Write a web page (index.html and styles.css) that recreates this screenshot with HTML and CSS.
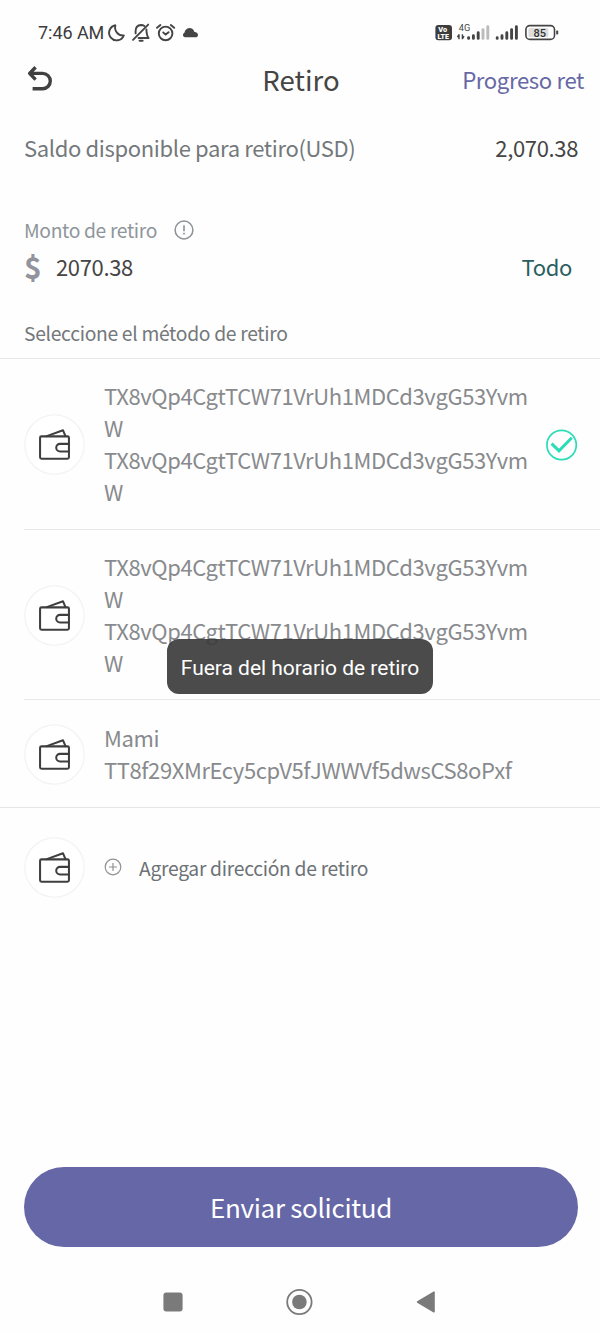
FILE: index.html
```html
<!DOCTYPE html>
<html lang="es">
<head>
<meta charset="utf-8">
<title>Retiro</title>
<link rel="stylesheet" href="styles.css">
</head>
<body>
<svg class="defs" width="0" height="0">
  <symbol id="wallet" viewBox="0 0 60 60">
    <circle cx="30" cy="30" r="29.2" fill="#fff" stroke="#f3f3f3" stroke-width="1.2"/>
    <g fill="none" stroke="#3e3e3e" stroke-width="2" stroke-linejoin="round" stroke-linecap="round">
      <rect x="15.8" y="22" width="28.4" height="22" rx="1.4"/>
      <path d="M22.4 21.8 38.4 16 40.8 21.8"/>
      <path d="M44.2 29.4H35.4a3.7 3.7 0 0 0 0 7.4H44.2"/>
    </g>
  </symbol>
</svg>
<div class="screen">
  <div class="status">
    <span class="clock">7:46 AM</span>
    <svg class="status-left" width="94" height="24" viewBox="106 20 94 24" fill="none" stroke="#444" stroke-width="1.9" stroke-linecap="round" stroke-linejoin="round">
      <path d="M115.4 25.3a7.6 7.6 0 1 0 8.4 10.2a8 8 0 0 1-8.4-10.2z"/>
      <path d="M133 39.8 148.2 24.6"/>
      <path d="M135.6 33.4v-2.2c0-3.6 2.2-6 5.4-6.2 1.4 0 2.4.3 3.4 1M146.4 29.4c.2 4.2.2 6 2.2 8.6H138.6"/>
      <path d="M139.6 40.8h3" stroke-width="2"/>
      <circle cx="165.6" cy="33.4" r="6.8"/>
      <path d="M163.2 32.4l2.4 2.2 3-2.4M157 27.8l3.4-2.8M174.2 27.8l-3.4-2.8"/>
      <path d="M184.8 37.2a2.3 2.3 0 0 1-.4-4.4c.7-2.7 2.2-4.5 5-4.7 2.5 0 4.2 1.4 4.8 3.6 2.6.2 3.9 1.7 3.8 3.4 0 1.2-.8 2.1-1.8 2.1z" fill="#444" stroke="none"/>
    </svg>
    <svg class="status-right" width="126" height="24" viewBox="434 20 126 24">
      <rect x="435.4" y="25" width="16.6" height="15.2" rx="3" fill="#3d3d3d"/>
      <g fill="#fff" font-family="Roboto, sans-serif" font-weight="900"><text x="438.3" y="32" font-size="7.4">Vo</text><text x="437.4" y="38.8" font-size="7">LTE</text></g>
      <text x="458.8" y="31" fill="#444" font-family="Roboto, sans-serif" font-size="9.2">4G</text>
      <path d="M459 34.2v5M457.4 37.2 459 34.6M462.4 34.2v5M464 36.2l-1.6 2.6" fill="none" stroke="#444" stroke-width="1.4"/>
      <g stroke="#444" stroke-width="2.9" stroke-linecap="round">
        <path d="M468.6 37.6v.8M473.4 35.8v2.6M478.2 32.8v5.6"/>
        <path d="M483 29.6v8.8M487.8 26.8v11.6" stroke="#bbb"/>
        <path d="M497.2 37.8v.6M502 35.8v2.6M506.8 32.8v5.6M511.6 29.6v8.8M516.4 26.8v11.6"/>
      </g>
      <rect x="525.9" y="25.6" width="28.6" height="13.8" rx="4" fill="#fff" stroke="#444" stroke-width="1.6"/>
      <rect x="528.4" y="28" width="20" height="9" rx="1.5" fill="#ddd"/>
      <path d="M557.2 30.6v3.8" stroke="#444" stroke-width="2"/>
      <text x="539.8" y="36.8" text-anchor="middle" fill="#333" font-family="Roboto, sans-serif" font-size="11" font-weight="500">85</text>
    </svg>
  </div>
  <header class="header">
    <svg class="back" width="26" height="26" viewBox="0 0 26 26" fill="none" stroke="#414141" stroke-width="3.4" stroke-linejoin="round"><path d="M8.6 1.2 2.6 7.4 8.6 13.6M2.6 7.4H15.6a7.7 7.7 0 0 1 0 15.4H5.6"/></svg>
    <h1 class="title">Retiro</h1>
    <span class="progress">Progreso ret</span>
  </header>
  <div class="balance"><span class="balance-label">Saldo disponible para retiro(USD)</span><span class="balance-value">2,070.38</span></div>
  <div class="amount-label"><span>Monto de retiro</span>
    <svg width="20" height="20" viewBox="0 0 20 20"><circle cx="10" cy="10" r="8.9" fill="none" stroke="#8b9298" stroke-width="1.5"/><path d="M10 5.2v6M10 12.8v1.8" stroke="#8b9298" stroke-width="1.6"/></svg>
  </div>
  <div class="amount"><span class="currency">$</span><span class="amount-value">2070.38</span><span class="all">Todo</span></div>
  <div class="method-label">Seleccione el método de retiro</div>
  <ul class="methods">
    <li class="method">
      <svg class="wallet"><use href="#wallet"/></svg>
      <div class="address"><p>TX8vQp4CgtTCW71VrUh1MDCd3vgG53YvmW</p><p>TX8vQp4CgtTCW71VrUh1MDCd3vgG53YvmW</p></div>
      <svg class="check" width="32" height="32" viewBox="0 0 32 32" fill="none" stroke="#2bdcb6"><circle cx="15.6" cy="16" r="14.7" stroke-width="1.7"/><path d="M5.6 14.6 13 21.8 25.8 8.8" stroke-width="3"/></svg>
    </li>
    <li class="method">
      <svg class="wallet"><use href="#wallet"/></svg>
      <div class="address"><p>TX8vQp4CgtTCW71VrUh1MDCd3vgG53YvmW</p><p>TX8vQp4CgtTCW71VrUh1MDCd3vgG53YvmW</p></div>
    </li>
    <li class="method">
      <svg class="wallet"><use href="#wallet"/></svg>
      <div class="address"><p>Mami</p><p>TT8f29XMrEcy5cpV5fJWWVf5dwsCS8oPxf</p></div>
    </li>
  </ul>
  <div class="add">
    <svg class="wallet"><use href="#wallet"/></svg>
    <svg class="plus" width="18" height="18" viewBox="0 0 18 18" fill="none" stroke="#929292" stroke-width="1.2"><circle cx="9" cy="9" r="7.8"/><path d="M9 5v8M5 9h8"/></svg>
    <span>Agregar dirección de retiro</span>
  </div>
  <button class="submit">Enviar solicitud</button>
  <nav class="nav">
    <svg width="28" height="28" viewBox="0 0 28 28"><rect x="4.4" y="4.4" width="19.2" height="19.2" rx="3" fill="#7a7a7a"/></svg>
    <svg width="28" height="28" viewBox="0 0 28 28"><circle cx="14.4" cy="14" r="12.2" fill="none" stroke="#7a7a7a" stroke-width="1.8"/><circle cx="14.4" cy="14" r="7.3" fill="#7a7a7a"/></svg>
    <svg width="28" height="28" viewBox="0 0 28 28"><path d="M5.6 14 22 4.2V23.8z" fill="#7a7a7a" stroke="#7a7a7a" stroke-width="1.6" stroke-linejoin="round"/></svg>
  </nav>
  <div class="toast">Fuera del horario de retiro</div>
</div>
</body>
</html>
```
FILE: styles.css
```css
* { box-sizing: border-box; }
body { margin: 0; background: #fefefe; font-family: "Noto Sans CJK SC", sans-serif; letter-spacing: -.35px; color: #454545; }
svg { display: block; flex: none; letter-spacing: 0; }
p, h1, ul { margin: 0; padding: 0; }
.defs { position: absolute; }
.screen { position: relative; display: flex; flex-direction: column; width: 600px; height: 1333px; white-space: nowrap; overflow: hidden; }
.status { display: flex; align-items: center; height: 56px; padding: 8px 40px 0 38px; }
.clock { width: 68px; font: 400 18px/24px Roboto, sans-serif; letter-spacing: -.05px; padding-top: 2px; color: #3c3c3c; }
.status-right { margin-left: auto; }
.header { display: grid; grid-template-columns: 1fr auto 1fr; align-items: center; height: 52px; padding: 0 16px 6px 27px; }
.title { font-size: 27.6px; line-height: 40px; font-weight: 400; margin-left: -9px; letter-spacing: 0; }
.progress { justify-self: end; font-size: 22.2px; line-height: 34px; letter-spacing: -.4px; color: #6768a6; }
.balance { display: flex; justify-content: space-between; align-items: center; height: 80px; padding: 0 22px 2px 24px; font-size: 22px; }
.balance-label { color: #74787b; }
.amount-label { display: flex; align-items: center; gap: 17px; margin-top: 25px; height: 33px; padding-left: 24px; font-size: 19.3px; color: #8f969b; }
.amount { display: flex; align-items: center; height: 43px; padding: 0 28px 3px 24px; font-size: 22px; }
.currency { width: 32px; font-size: 30px; font-weight: 700; line-height: 40px; color: #92939d; }
.all { margin-left: auto; color: #2b5f62; }
.method-label { height: 69px; padding: 27px 0 0 24px; font-size: 19.3px; line-height: 34px; letter-spacing: -.31px; color: #74787b; }
.methods { list-style: none; border-top: 1px solid #e5e5e5; border-bottom: 1px solid #e5e5e5; }
.method { display: flex; align-items: center; height: 171px; margin-left: 24px; padding: 1px 22px 0 0; border-bottom: 1px solid #e8e8e8; }
.method:nth-child(2) { height: 170px; }
.method:last-child { height: 107px; border-bottom: 0; }
.wallet { width: 61px; height: 61px; }
.address { width: 426px; margin: -3px 15px 0 19px; font-size: 22px; line-height: 32px; letter-spacing: -.4px; color: #888a8d; white-space: normal; overflow-wrap: anywhere; }
.check { margin-left: auto; }
.add { display: flex; align-items: center; height: 119px; padding-left: 24px; font-size: 19.3px; letter-spacing: -.3px; color: #6c7276; }
.plus { margin: 0 17px 2px 19px; }
.submit { width: 554px; height: 80px; margin: auto 0 0 24px; padding: 0; border: 0; border-radius: 40px; background: #6667a6; color: #fff; font: 400 26px/80px "Noto Sans CJK SC", sans-serif; letter-spacing: -.3px; }
.nav { display: flex; justify-content: space-between; align-items: center; height: 86px; padding: 23px 160px 0 158.5px; }
.toast { position: absolute; left: 167px; top: 639px; width: 266px; height: 55px; border-radius: 12px; background: rgba(55, 55, 55, .9); color: #fff; font: 400 21px/58px Roboto, sans-serif; letter-spacing: -.02px; text-align: center; }
```
